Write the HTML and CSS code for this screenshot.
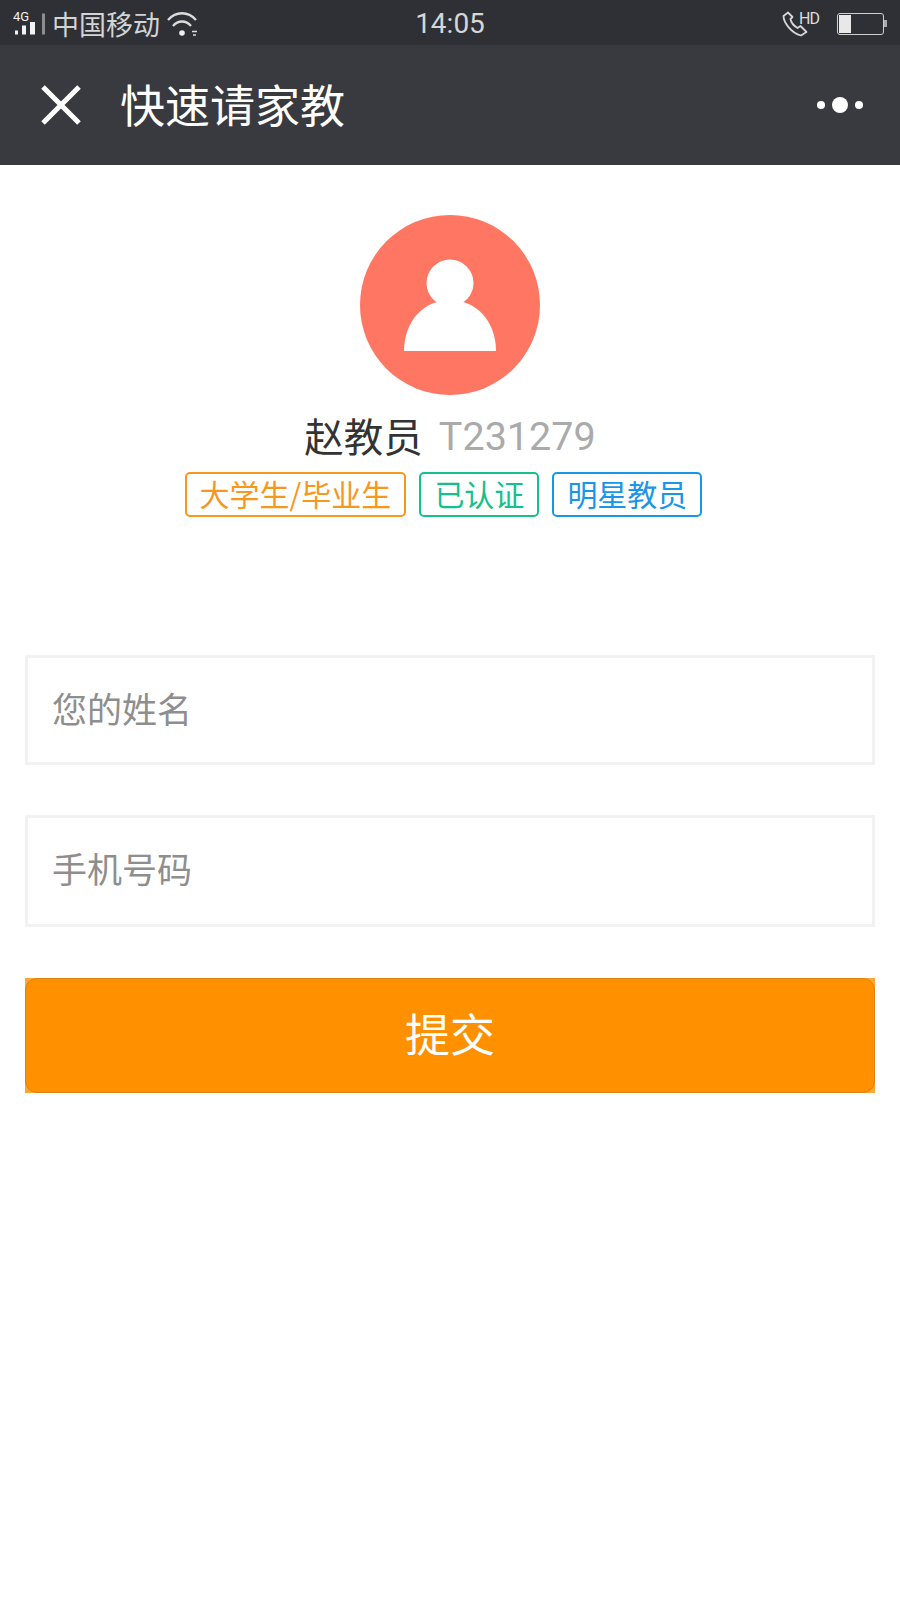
FILE: index.html
```html
<!DOCTYPE html>
<html lang="zh-CN">
<head>
<meta charset="utf-8">
<title>快速请家教</title>
<link rel="stylesheet" href="styles.css">
</head>
<body>
<div class="status">
  <div class="status-left">
    <span class="net">4G</span>
    <svg class="signal" width="36" height="24" viewBox="0 0 36 24"><rect x="2" y="18.500" width="3" height="4" fill="#f2f2f2"/><rect x="9" y="13.500" width="4" height="9" fill="#f2f2f2"/><rect x="17" y="10" width="5" height="12.500" fill="#f2f2f2"/><rect x="29" y="1.500" width="3" height="21" fill="#8d8e90"/></svg>
    <span class="carrier">中国移动</span>
    <svg class="wifi" width="32" height="26" viewBox="0 0 32 26" fill="none" stroke="#dcdcdc" stroke-width="2.300"><path d="M1 9C9 0 21 0 29 9"/><path d="M6 15C11 9 19 9 24 15"/><circle cx="15" cy="22" r="2.800" fill="#eee" stroke="none"/><path d="M25 20.500h5M26 24h3" stroke-width="1.500"/></svg>
  </div>
  <div class="time">14:05</div>
  <div class="status-right">
    <svg class="phone" width="26" height="26" viewBox="0 0 26 26" fill="none" stroke="#d6d6d6" stroke-width="1.800" stroke-linejoin="round"><path d="M6 1.500L1.500 5C1.500 11 9 22 19 24.500L24.500 21L18.500 15L15.500 17C12 15 9 11 8.500 8L10.500 6Z"/></svg>
    <span class="hd">HD</span>
    <div class="battery"><div class="battery-fill"></div></div>
    <div class="battery-nib"></div>
  </div>
</div>
<header class="nav">
  <svg class="close" width="40" height="40" viewBox="0 0 40 40" stroke="#fff" stroke-width="5"><path d="M2 2L38 38M38 2L2 38"/></svg>
  <h1 class="title">快速请家教</h1>
  <div class="more"><i class="dot"></i><i class="dot dot-big"></i><i class="dot"></i></div>
</header>
<main>
  <section class="profile">
    <div class="avatar">
      <svg width="92" height="92" viewBox="0 0 92 92"><circle cx="46" cy="24" r="23.500" fill="#fff"/><path d="M0 92C0 62 20 41 46 41C72 41 92 62 92 92Z" fill="#fff"/></svg>
    </div>
    <div class="name"><span class="name-text">赵教员</span><span class="code">T231279</span></div>
    <div class="tags">
      <span class="tag tag-orange">大学生/毕业生</span>
      <span class="tag tag-green">已认证</span>
      <span class="tag tag-blue">明星教员</span>
    </div>
  </section>
  <form class="form">
    <input class="field" type="text" placeholder="您的姓名">
    <input class="field field-phone" type="text" placeholder="手机号码">
    <div class="submit-wrap"><button class="submit" type="button">提交</button></div>
  </form>
</main>
</body>
</html>
```
FILE: styles.css
```css
* { box-sizing: border-box; }
html, body { margin: 0; padding: 0; }
body {
  width: 900px;
  height: 1600px;
  background: #fff;
  font-family: "Noto Sans CJK SC", Roboto, sans-serif;
  overflow: hidden;
}
.status {
  height: 45px;
  background: #2f3035;
  display: grid;
  grid-template-columns: 1fr auto 1fr;
  align-items: center;
  padding: 0 13px;
  color: #d8d8d8;
}
.status-left, .status-right { display: flex; align-items: center; }
.status-left { position: relative; }
.net {
  position: absolute;
  left: 0;
  top: 10px;
  font: 13px/12px Roboto, sans-serif;
  color: #f0f0f0;
}
.carrier { font-size: 27px; line-height: 45px; margin-left: 3px; color: #d4d4d4; }
.wifi { margin-left: 7px; }
.time { font: 28px/47px Roboto, sans-serif; color: #d6d6d6; }
.status-right { justify-content: flex-end; position: relative; }
.phone { margin-right: 29px; }
.hd {
  position: absolute;
  right: 68px;
  top: 0;
  font: 16px/16px Roboto, sans-serif;
  letter-spacing: -1px;
  color: #dcdcdc;
}
.battery {
  width: 47px;
  height: 22px;
  border: 1.500px solid #cfcfcf;
  border-radius: 3px;
  padding: 1px;
}
.battery-fill { width: 12px; height: 100%; background: #e8e8e8; }
.battery-nib { width: 3px; height: 7px; background: #aaa; }
.nav {
  height: 120px;
  background: #393a3f;
  display: flex;
  align-items: center;
  padding: 0 37px 0 41px;
}
.close { flex: none; }
.title {
  margin: 0 0 0 39px;
  padding-bottom: 4px;
  font-size: 45px;
  font-weight: 400;
  color: #fff;
  flex: 1;
}
.more { display: flex; align-items: center; gap: 7px; }
.dot { display: block; width: 8px; height: 8px; border-radius: 50%; background: #fff; }
.dot-big { width: 16px; height: 16px; }
.profile {
  display: flex;
  flex-direction: column;
  align-items: center;
  padding-top: 50px;
}
.avatar {
  width: 180px;
  height: 180px;
  border-radius: 50%;
  background: #ff7663;
  display: flex;
  align-items: center;
  justify-content: center;
}
.name {
  margin-top: 14px;
  display: flex;
  align-items: center;
  gap: 16px;
  font-size: 39.500px;
  line-height: 52px;
  color: #333;
}
.name-text { margin-bottom: 4px; }
.code { font-family: Roboto, sans-serif; color: #aaa; }
.tags { display: flex; margin-top: 7px; }
.tag {
  height: 45px;
  margin-right: 13px;
  border: 2.500px solid currentColor;
  border-radius: 5px;
  padding: 0 13px;
  font-size: 30px;
  line-height: 38px;
}
.tag-orange { color: #f6981e; }
.tag-green { color: #14c08c; }
.tag-blue { color: #1a96e8; }
.form {
  display: flex;
  flex-direction: column;
  padding: 138px 25px 0;
}
.field {
  height: 110px;
  width: 100%;
  border: 3px solid #f2f2f2;
  border-radius: 0;
  outline: none;
  padding: 0 24px 6px;
  font-family: inherit;
  font-size: 35px;
  background: #fff;
}
.field::placeholder { color: #8e8e8e; opacity: 1; }
.field-phone { height: 112px; margin-top: 50px; padding-bottom: 7px; }
.submit-wrap { margin-top: 51px; background: #ffa533; height: 115px; }
.submit {
  display: block;
  width: 100%;
  height: 100%;
  border: 1.500px solid #d9830f;
  border-radius: 12px;
  background: #ff9000;
  color: #fff;
  font-family: inherit;
  font-size: 45px;
  padding: 0 0 7px;
}
```
